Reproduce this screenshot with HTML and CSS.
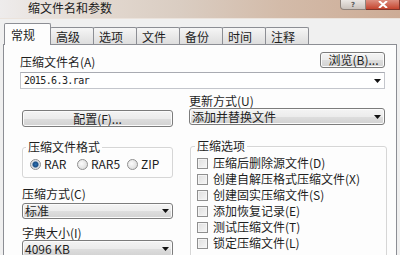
FILE: index.html
```html
<!DOCTYPE html>
<html lang="zh-CN">
<head>
<meta charset="utf-8">
<title>压缩文件名和参数</title>
<link rel="stylesheet" href="styles.css">
</head>
<body>
<div class="window">
  <div class="titlebar">
    <span class="title">缩文件名和参数</span>
    <div class="caption">
      <span class="help">?</span>
      <span class="close"><svg width="10" height="7" viewBox="0 0 10 7"><path d="M1 0L9 7M9 0L1 7" stroke="#fff" stroke-width="2"/></svg></span>
    </div>
  </div>
  <div class="client">
    <div class="tabs">
      <div class="tab active">常规</div>
      <div class="tab">高级</div>
      <div class="tab">选项</div>
      <div class="tab">文件</div>
      <div class="tab">备份</div>
      <div class="tab">时间</div>
      <div class="tab">注释</div>
    </div>
    <div class="panel">
      <div class="row-top">
        <span class="lbl">压缩文件名(A)</span>
        <div class="btn browse">浏览(B)...</div>
      </div>
      <div class="combo edit">
        <span class="mono">2015.6.3.rar</span>
        <svg class="arrow" width="7" height="4" viewBox="0 0 7 4"><path d="M0 0H7L3.5 4Z" fill="#111"/></svg>
      </div>
      <div class="cols">
        <div class="col col-left">
          <div class="btn config">配置(F)...</div>
          <fieldset class="group fmt">
            <legend>压缩文件格式</legend>
            <div class="radios">
              <div class="opt"><span class="radio on"></span>RAR</div>
              <div class="opt"><span class="radio"></span>RAR5</div>
              <div class="opt"><span class="radio"></span>ZIP</div>
            </div>
          </fieldset>
          <span class="lbl method">压缩方式(C)</span>
          <div class="combo list short">
            <span>标准</span>
            <svg class="arrow" width="7" height="4" viewBox="0 0 7 4"><path d="M0 0H7L3.5 4Z" fill="#111"/></svg>
          </div>
          <span class="lbl dict">字典大小(I)</span>
          <div class="combo list dictbox">
            <span>4096 KB</span>
            <svg class="arrow" width="7" height="4" viewBox="0 0 7 4"><path d="M0 0H7L3.5 4Z" fill="#111"/></svg>
          </div>
        </div>
        <div class="col col-right">
          <span class="lbl">更新方式(U)</span>
          <div class="combo list update">
            <span>添加并替换文件</span>
            <svg class="arrow" width="7" height="4" viewBox="0 0 7 4"><path d="M0 0H7L3.5 4Z" fill="#111"/></svg>
          </div>
          <fieldset class="group opts">
            <legend>压缩选项</legend>
            <div class="checks">
              <div class="chk"><span class="box"></span>压缩后删除源文件(D)</div>
              <div class="chk"><span class="box"></span>创建自解压格式压缩文件(X)</div>
              <div class="chk"><span class="box"></span>创建固实压缩文件(S)</div>
              <div class="chk"><span class="box"></span>添加恢复记录(E)</div>
              <div class="chk"><span class="box"></span>测试压缩文件(T)</div>
              <div class="chk"><span class="box"></span>锁定压缩文件(L)</div>
            </div>
          </fieldset>
        </div>
      </div>
    </div>
  </div>
</div>
</body>
</html>
```

FILE: styles.css
```css
* { box-sizing: border-box; margin: 0; padding: 0; }
html, body { width: 400px; height: 255px; overflow: hidden; background: #f0f0f0; }
body {
  font-family: "Noto Sans CJK SC", "Noto Sans", sans-serif;
  font-size: 12px;
  line-height: 12px;
  color: #1e1e1e;
}
.window { width: 400px; height: 255px; display: flex; flex-direction: column; overflow: hidden; }

.titlebar {
  height: 19px;
  flex: none;
  display: flex;
  align-items: flex-start;
  background: linear-gradient(90deg, #eeecec 0, #e4dbd3 20%, #dacdc2 45%, #d3bba9 70%, #cdac96 100%);
  border-bottom: 1px solid #ebe3dc;
}
.title { flex: 1; padding: 2px 0 0 28px; font-size: 12px; line-height: 12px; color: #1a1a1a; }
.caption { display: flex; }
.help {
  width: 26px; height: 10px;
  background: linear-gradient(#ebe7e4, #c9c1bb);
  border: 1px solid #8f837c; border-top: none;
  border-radius: 0 0 0 4px;
  padding-top: 1px;
  font-family: "DejaVu Sans", sans-serif;
  font-size: 7px; line-height: 8px; font-weight: bold; text-align: center; color: #5a5a5a;
}
.close {
  width: 34px; height: 10px;
  display: flex; align-items: center; justify-content: center;
  background: linear-gradient(#dd8f80, #c5452f);
  border: 1px solid #80352b; border-top: none; border-left: none;
}

.client { flex: 1; padding: 4px 3px 0 3px; display: flex; flex-direction: column; min-height: 0; }

.tabs { display: flex; align-items: flex-end; height: 22px; flex: none; margin-bottom: -1px; padding-left: 1px; }
.tab {
  width: 44px; height: 17px;
  margin-left: -1px; margin-bottom: 1px;
  padding: 3px 0 0 5px;
  border: 1px solid #8c8e94; border-bottom: none;
  background: linear-gradient(#f6f6f6, #e9e9e9 50%, #dedede);
  border-radius: 2px 2px 0 0;
}
.tab.active {
  position: relative; z-index: 1;
  width: 47px; height: 22px; margin-left: 0; margin-bottom: 0;
  padding: 5px 0 0 6px;
  background: #fdfdfd;
}

.panel {
  flex: 1;
  min-height: 0;
  overflow: hidden;
  border: 1px solid #8c8e94;
  border-bottom: none;
  background: #fdfdfd;
  padding: 7px 11px 0 16px;
}

.row-top { display: flex; justify-content: space-between; align-items: flex-end; height: 16px; }
.lbl { display: block; line-height: 12px; }

.btn {
  display: flex; align-items: center; justify-content: center;
  border: 1px solid #7c7c7c; border-radius: 3px;
  background: linear-gradient(#f4f4f4 0, #ececec 50%, #dedede 51%, #d2d2d2 100%);
  box-shadow: inset 0 0 0 1px #fbfbfb;
  line-height: 12px;
}
.browse { width: 65px; height: 16px; padding-left: 2px; }
.config { height: 17px; }

.combo { display: flex; align-items: center; height: 17px; padding-left: 3px; }
.combo .arrow { margin-left: auto; margin-right: 3px; flex: none; }
.edit {
  margin-top: 4px;
  border: 1px solid #c4c6cc; border-top-color: #a9abb2;
  background: #fff;
}
.mono { font-family: "DejaVu Sans Mono", monospace; font-size: 10px; letter-spacing: -0.6px; color: #222; }
.list {
  border: 1px solid #7c7c7c; border-radius: 3px;
  background: linear-gradient(#f4f4f4 0, #ececec 50%, #dedede 51%, #d2d2d2 100%);
  box-shadow: inset 0 0 0 1px #fbfbfb;
  padding-left: 2px;
}
.update { margin-top: 1px; }

.cols { display: flex; gap: 16px; margin-top: 6px; }
.col { display: flex; flex-direction: column; }
.col-left { width: 153px; padding: 15px 0 0 2px; }
.col-right { flex: 1; }

.group {
  border: 1px solid #d6d6d6; border-radius: 3px;
  box-shadow: inset 1px 1px 0 #fff;
}
.group legend { padding: 0 2px; line-height: 12px; }
.fmt { margin-top: 14px; padding: 3px 3px 5px 3px; }
.radios { display: grid; grid-template-columns: 47px 50px auto; margin-left: 4px; height: 16px; align-items: center; }
.opt { display: flex; align-items: center; gap: 3px; }
.radio {
  width: 11px; height: 11px; border-radius: 50%;
  border: 1px solid #8f8f8f;
  background: radial-gradient(circle at 40% 40%, #fbfbfb, #d4d4d4);
}
.radio.on { background: radial-gradient(circle, #2b6fb0 0, #1b4f86 2.5px, #cfd6de 3.5px, #f2f2f2 5px); }

.method { margin-top: 10px; }
.short { margin-top: 3px; height: 16px; }
.dict { margin-top: 8px; }
.dictbox { margin-top: 1px; }

.opts { margin: 15px -2px 0 1px; padding: 3px 4px 20px 4px; }
.checks { margin-left: 2px; display: flex; flex-direction: column; }
.chk { display: flex; align-items: center; height: 16px; gap: 5px; }
.box {
  width: 11px; height: 11px;
  border: 1px solid #8f8f8f;
  background: linear-gradient(135deg, #dedede, #f6f6f6);
  box-shadow: inset 0 0 0 1px #f4f4f4;
}
```
